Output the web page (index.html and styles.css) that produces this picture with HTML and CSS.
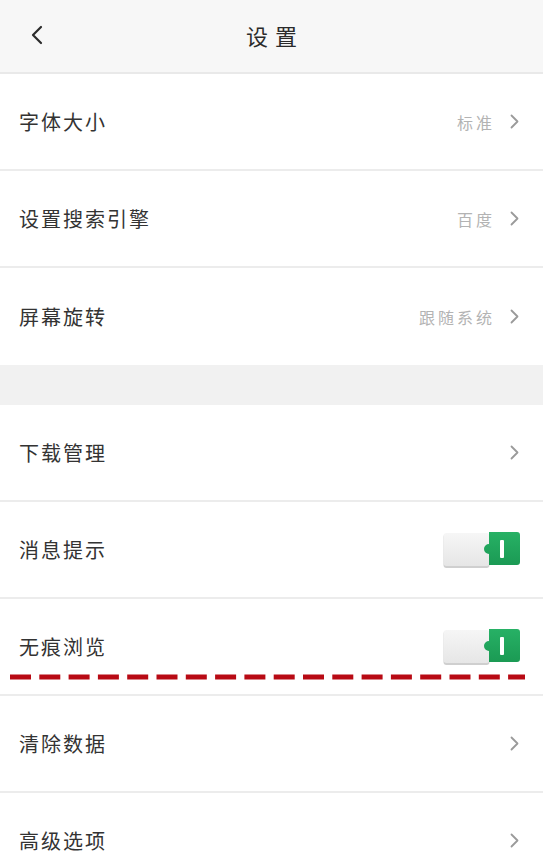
FILE: index.html
```html
<!DOCTYPE html>
<html lang="zh-CN">
<head>
<meta charset="utf-8">
<title>设置</title>
<link rel="stylesheet" href="styles.css">
</head>
<body>
<div class="page">
  <header class="nav">
    <span class="back">
      <svg width="14" height="20" viewBox="0 0 14 20"><path d="M11 2 L3 10 L11 18" fill="none" stroke="#2b2b2b" stroke-width="2.2" stroke-linecap="round" stroke-linejoin="round"/></svg>
    </span>
    <h1 class="title">设置</h1>
  </header>

  <section class="group group-a">
    <div class="row">
      <span class="label">字体大小</span>
      <span class="right"><span class="value">标准</span><svg class="chev" width="9" height="15" viewBox="0 0 9 15"><path d="M1.5 1.5 L7.5 7.5 L1.5 13.5" fill="none" stroke="#9a9a9a" stroke-width="1.8" stroke-linecap="round" stroke-linejoin="round"/></svg></span>
    </div>
    <div class="row">
      <span class="label">设置搜索引擎</span>
      <span class="right"><span class="value">百度</span><svg class="chev" width="9" height="15" viewBox="0 0 9 15"><path d="M1.5 1.5 L7.5 7.5 L1.5 13.5" fill="none" stroke="#9a9a9a" stroke-width="1.8" stroke-linecap="round" stroke-linejoin="round"/></svg></span>
    </div>
    <div class="row row-last">
      <span class="label">屏幕旋转</span>
      <span class="right"><span class="value">跟随系统</span><svg class="chev" width="9" height="15" viewBox="0 0 9 15"><path d="M1.5 1.5 L7.5 7.5 L1.5 13.5" fill="none" stroke="#9a9a9a" stroke-width="1.8" stroke-linecap="round" stroke-linejoin="round"/></svg></span>
    </div>
  </section>

  <div class="band"></div>

  <section class="group group-b">
    <div class="row">
      <span class="label">下载管理</span>
      <span class="right"><svg class="chev" width="9" height="15" viewBox="0 0 9 15"><path d="M1.5 1.5 L7.5 7.5 L1.5 13.5" fill="none" stroke="#9a9a9a" stroke-width="1.8" stroke-linecap="round" stroke-linejoin="round"/></svg></span>
    </div>
    <div class="row">
      <span class="label">消息提示</span>
      <span class="right toggle-wrap">
        <svg class="toggle" width="78" height="36" viewBox="0 0 78 36">
          <defs>
            <linearGradient id="g1" x1="0" y1="0" x2="0" y2="1"><stop offset="0" stop-color="#f6f6f6"/><stop offset="1" stop-color="#e6e6e6"/></linearGradient>
            <linearGradient id="gr1" x1="0" y1="0" x2="0" y2="1"><stop offset="0" stop-color="#27b165"/><stop offset="1" stop-color="#1b9a54"/></linearGradient>
          </defs>
          <rect x="0.5" y="2" width="46" height="34" rx="3" fill="#cfcfcf"/>
          <rect x="0.5" y="1" width="46" height="33" rx="3" fill="url(#g1)"/>
          <path d="M46 0 H74 Q77 0 77 3 V30 Q77 33 74 33 H46 V22 A4.5 4.5 0 0 1 46 12 Z" fill="url(#gr1)"/>
          <rect x="57" y="8" width="4" height="18" rx="1" fill="#ffffff"/>
        </svg>
      </span>
    </div>
    <div class="row">
      <span class="label">无痕浏览</span>
      <span class="right toggle-wrap">
        <svg class="toggle" width="78" height="36" viewBox="0 0 78 36">
          <defs>
            <linearGradient id="g2" x1="0" y1="0" x2="0" y2="1"><stop offset="0" stop-color="#f6f6f6"/><stop offset="1" stop-color="#e6e6e6"/></linearGradient>
            <linearGradient id="gr2" x1="0" y1="0" x2="0" y2="1"><stop offset="0" stop-color="#27b165"/><stop offset="1" stop-color="#1b9a54"/></linearGradient>
          </defs>
          <rect x="0.5" y="2" width="46" height="34" rx="3" fill="#cfcfcf"/>
          <rect x="0.5" y="1" width="46" height="33" rx="3" fill="url(#g2)"/>
          <path d="M46 0 H74 Q77 0 77 3 V30 Q77 33 74 33 H46 V22 A4.5 4.5 0 0 1 46 12 Z" fill="url(#gr2)"/>
          <rect x="57" y="8" width="4" height="18" rx="1" fill="#ffffff"/>
        </svg>
      </span>
      <svg class="dash" width="520" height="8" viewBox="0 0 520 8"><line x1="2" y1="4" x2="517" y2="4" stroke="#b80a14" stroke-width="5" stroke-linecap="butt" stroke-dasharray="21 8.3"/></svg>
    </div>
    <div class="row">
      <span class="label">清除数据</span>
      <span class="right"><svg class="chev" width="9" height="15" viewBox="0 0 9 15"><path d="M1.5 1.5 L7.5 7.5 L1.5 13.5" fill="none" stroke="#9a9a9a" stroke-width="1.8" stroke-linecap="round" stroke-linejoin="round"/></svg></span>
    </div>
    <div class="row">
      <span class="label">高级选项</span>
      <span class="right"><svg class="chev" width="9" height="15" viewBox="0 0 9 15"><path d="M1.5 1.5 L7.5 7.5 L1.5 13.5" fill="none" stroke="#9a9a9a" stroke-width="1.8" stroke-linecap="round" stroke-linejoin="round"/></svg></span>
    </div>
  </section>
</div>
</body>
</html>
```

FILE: styles.css
```css
html, body {
  margin: 0;
  padding: 0;
  background: #ffffff;
}

body {
  font-family: "Noto Sans CJK SC", "Noto Sans", sans-serif;
  color: #333333;
  overflow: hidden;
}

.page {
  width: 543px;
  height: 861px;
  overflow: hidden;
}

.nav {
  height: 74px;
  box-sizing: border-box;
  background: #f7f7f7;
  border-bottom: 2px solid #e9e9e9;
  display: grid;
  grid-template-columns: 1fr auto 1fr;
  align-items: center;
  padding: 0 0 2px 0;
}

.back {
  display: flex;
  align-items: center;
  padding-left: 30px;
}

.title {
  margin: 0;
  font-size: 22px;
  font-weight: 400;
  letter-spacing: 7px;
  margin-right: -7px;
  color: #2b2b2b;
}

.group {
  display: flex;
  flex-direction: column;
}

.row {
  position: relative;
  box-sizing: border-box;
  display: flex;
  align-items: center;
  justify-content: space-between;
  padding: 0 24px 0 19px;
  border-bottom: 2px solid #ececec;
  background: #ffffff;
}

.group-a .row {
  height: 97px;
}

.group-a .row-last {
  border-bottom: none;
  height: 97px;
}

.group-b .row {
  height: 97px;
}

.label {
  font-size: 20px;
  letter-spacing: 2px;
  color: #333333;
}

.right {
  display: flex;
  align-items: center;
}

.value {
  font-size: 16px;
  letter-spacing: 3px;
  color: #b3b3b3;
  margin-right: 15px;
}

.chev {
  display: block;
}

.toggle-wrap {
  margin-right: -2px;
}

.toggle {
  display: block;
}

.band {
  height: 40px;
  background: #f1f1f1;
}

.dash {
  position: absolute;
  left: 8px;
  top: 74px;
}
```
